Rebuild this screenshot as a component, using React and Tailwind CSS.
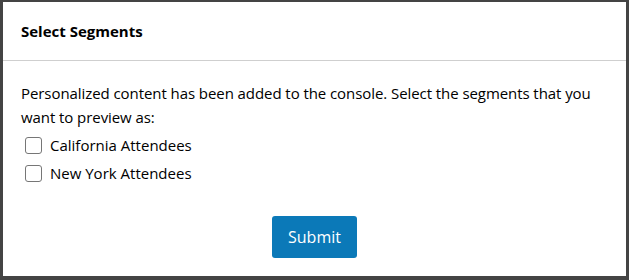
import React from "react";

function Check({ label }) {
  return (
    <label className="flex items-center h-[28px] pl-[4px]">
      <span className="w-[17px] h-[17px] rounded-[3px] border border-[#767676] bg-white box-border" />
      <span className="ml-[8px] text-[15px] text-black">{label}</span>
    </label>
  );
}

export default function App() {
  return (
    <div
      className="w-[629px] h-[280px] bg-white box-border border-[#444444] border-t-[2px] border-l-[3px] border-r-[3px] border-b-[4px] flex flex-col"
      style={{ fontFamily: '"Open Sans", "Noto Sans", sans-serif' }}
    >
      <div className="h-[59px] flex items-center px-[18px] border-b border-[#cfcfcf]">
        <h1 className="text-[15px] font-bold text-black">Select Segments</h1>
      </div>
      <div className="flex flex-col px-[18px] pt-[20px]">
        <p className="text-[15px] leading-[24px] text-black tracking-[-0.07px]">
          Personalized content has been added to the console. Select the segments that you want to preview as:
        </p>
        <div className="flex flex-col mt-[2px]">
          <Check label="California Attendees" />
          <Check label="New York Attendees" />
        </div>
        <div className="flex justify-center mt-[29px]">
          <button className="w-[85px] h-[42px] rounded-[3px] bg-[#0b79b8] text-white text-[16px]">
            Submit
          </button>
        </div>
      </div>
    </div>
  );
}
